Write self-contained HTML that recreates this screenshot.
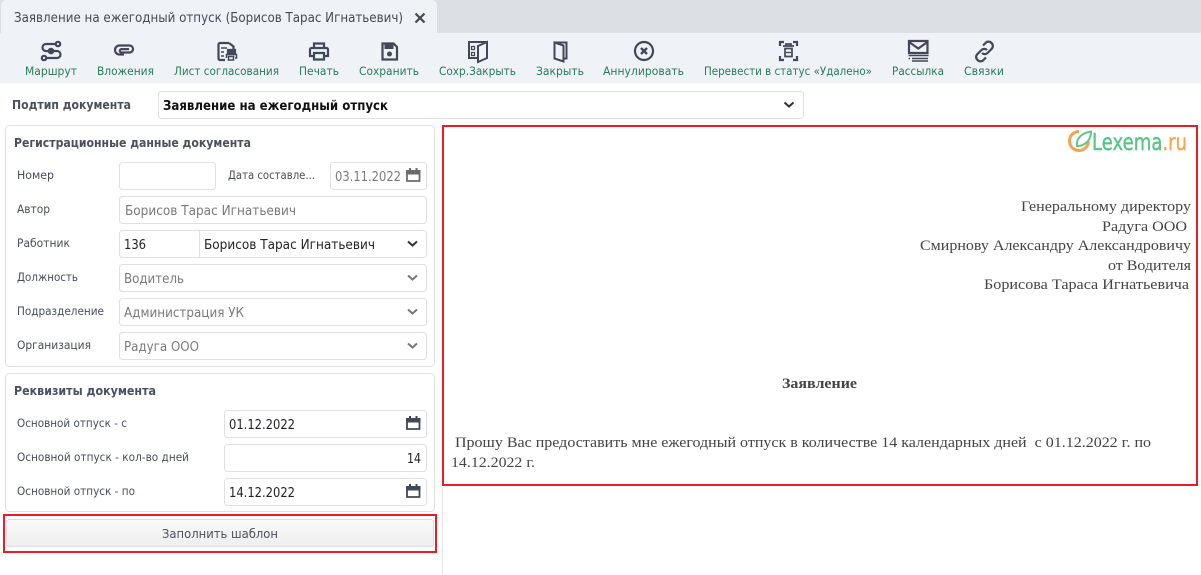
<!DOCTYPE html>
<html lang="ru"><head><meta charset="utf-8"><title>Заявление</title>
<style>
html,body{margin:0;padding:0;background:#fff;width:1201px;height:575px;overflow:hidden}
svg{display:block}
text{font-family:"DejaVu Sans","Liberation Sans",sans-serif;white-space:pre}
.tb{font-size:11.8px;fill:#2b7a58}
.lb{font-size:11.8px;fill:#484d5c}
.h{font-size:12px;font-weight:bold;fill:#4b505f}
.dis{font-size:13.2px;fill:#7a7a7a}
.en{font-size:13.2px;fill:#222327}
.d{font-family:"Liberation Serif",serif;font-size:15px;fill:#444}
.ic{fill:none;stroke:#42485a;stroke-width:2.200}
.f{fill:#fff;stroke:#dfdfe8;stroke-width:1}
</style></head><body>
<svg width="1201" height="575" viewBox="0 0 1201 575" xmlns="http://www.w3.org/2000/svg">
<defs><linearGradient id="g" x1="0" y1="0" x2="0" y2="1"><stop offset="0" stop-color="#fafafa"/><stop offset="1" stop-color="#eeeeee"/></linearGradient></defs>
<rect width="1201" height="575" fill="#fff"/>
<rect width="1201" height="33" fill="#dcdfe4"/>
<path d="M1 33V5a5 5 0 0 1 5-5H432a5 5 0 0 1 5 5V33Z" fill="#eff2f7"/>
<rect y="33" width="1201" height="50" fill="#eff2f7"/>
<text x="14" y="22" font-size="13.2" fill="#444a58" textLength="389" lengthAdjust="spacingAndGlyphs">Заявление на ежегодный отпуск (Борисов Тарас Игнатьевич)</text>
<path d="M415.500 13.500l9 9m0-9l-9 9" fill="none" stroke="#42485a" stroke-width="2.200"/>

<!-- toolbar icons -->
<g class="ic">
<path d="M56 44H46a3.500 3.500 0 0 0 0 7h11a3.500 3.500 0 0 1 0 7H47"/><circle cx="58" cy="44" r="2.200"/><circle cx="44" cy="58" r="2.200"/><circle cx="51" cy="51" r="2.200" fill="#42485a"/>
<path d="M124 54.500h-4.500a4.500 4.500 0 0 1 0-9h10a3.500 3.500 0 0 1 0 7h-8a1.700 1.700 0 0 1 0-3.400h7.500"/>
<path d="M229 43h-9a1.500 1.500 0 0 0-1.500 1.500v14a1.500 1.500 0 0 0 1.500 1.500h5M229 43l4.500 3.500V50"/><path d="M221 48h6M221 52h3M221 56h3" stroke-width="1.500"/>
<path d="M228 50h7v3h-7z" fill="#42485a"/><path d="M226.500 58v-3.500h10V58h-1.500M228.500 56.500h5v3.500h-5z" stroke-width="1.500"/>
<path d="M314 48v-4.500h10V48M314 56h-4v-6.500a1.500 1.500 0 0 1 1.500-1.500h15a1.500 1.500 0 0 1 1.500 1.500V56h-4M314 53h10v6.500h-10z"/>
<path d="M382.500 43.500h11l3.500 3.500v12.500h-14.500z"/><path d="M385 44v4.500h8V44" fill="#42485a" stroke-width="1"/><circle cx="389.500" cy="54" r="2.500" fill="#42485a" stroke="none"/>
<path d="M478 42h-9v16h9M487 42h-9M487 42v16l-9 4V46l9-4z" stroke-width="2"/><path d="M471.500 46.500h3v3h-3zM471.500 52.500h3v3h-3z" stroke-width="1.200"/>
<path d="M554.500 42.500h12V58.500h-3M554.500 42.500l9 3v16l-9-3z" stroke-width="2"/>
<circle cx="644" cy="51" r="9"/><path d="M641 48l6 6m0-6l-6 6" stroke-width="2.400"/>
<path d="M780 46v-4h4M793 42h4v4M797 56v4h-4M784 60h-4v-4"/><path d="M783 46h11M786 46v-2h5v2M785 48.500h7v8h-7z" stroke-width="1.700"/><path d="M786 52.500h5" stroke-width="1.300"/>
<path d="M909 41h18.500v12h-18.500zM909 42l9.300 6.500 9.200-6.500"/><path d="M908.500 55.500h20M912 58.500h16M908.500 58.500h1.500M912 61h16" stroke-width="1.500"/>
<path d="M983 45.500l2.500-2.500a4 4 0 0 1 6 0 4 4 0 0 1 0 6l-4 4a4 4 0 0 1-5.500 0M986 57.500l-2.500 2.500a4 4 0 0 1-6 0 4 4 0 0 1 0-6l4-4a4 4 0 0 1 5.500 0"/>
</g>
<!-- toolbar labels -->
<text class="tb" x="25" y="75" textLength="52" lengthAdjust="spacingAndGlyphs">Маршрут</text>
<text class="tb" x="97" y="75" textLength="57" lengthAdjust="spacingAndGlyphs">Вложения</text>
<text class="tb" x="174" y="75" textLength="105" lengthAdjust="spacingAndGlyphs">Лист согласования</text>
<text class="tb" x="299" y="75" textLength="40" lengthAdjust="spacingAndGlyphs">Печать</text>
<text class="tb" x="359" y="75" textLength="60" lengthAdjust="spacingAndGlyphs">Сохранить</text>
<text class="tb" x="439" y="75" textLength="77" lengthAdjust="spacingAndGlyphs">Сохр.Закрыть</text>
<text class="tb" x="536" y="75" textLength="48" lengthAdjust="spacingAndGlyphs">Закрыть</text>
<text class="tb" x="603" y="75" textLength="81" lengthAdjust="spacingAndGlyphs">Аннулировать</text>
<text class="tb" x="704" y="75" textLength="168" lengthAdjust="spacingAndGlyphs">Перевести в статус «Удалено»</text>
<text class="tb" x="892" y="75" textLength="52" lengthAdjust="spacingAndGlyphs">Рассылка</text>
<text class="tb" x="964" y="75" textLength="40" lengthAdjust="spacingAndGlyphs">Связки</text>

<!-- subtype -->
<text class="h" x="12" y="109" textLength="119" lengthAdjust="spacingAndGlyphs">Подтип документа</text>
<rect class="f" x="158.500" y="91.500" width="645" height="27" rx="3"/>
<text x="163" y="110" font-size="13.200" font-weight="bold" fill="#111" textLength="225" lengthAdjust="spacingAndGlyphs">Заявление на ежегодный отпуск</text>
<path d="M784.500 102.500l4.500 4 4.500-4" fill="none" stroke="#333" stroke-width="2"/>

<!-- panel 1 -->
<rect class="f" x="5.500" y="125.500" width="429" height="241" rx="4"/>
<text class="h" x="14" y="147" textLength="237" lengthAdjust="spacingAndGlyphs">Регистрационные данные документа</text>
<text class="lb" x="17" y="179" textLength="37" lengthAdjust="spacingAndGlyphs">Номер</text>
<rect class="f" x="119.500" y="162.500" width="96" height="27" rx="3"/>
<text class="lb" x="228" y="179" textLength="87" lengthAdjust="spacingAndGlyphs">Дата составле...</text>
<rect class="f" x="330.500" y="162.500" width="96" height="27" rx="3"/>
<text class="dis" x="335" y="181" textLength="66" lengthAdjust="spacingAndGlyphs">03.11.2022</text>
<path d="M407 171h12.500v10h-12.500z" fill="none" stroke="#6c6c6c" stroke-width="1.800"/><path d="M406 170h14.500v4.500h-14.500zM409 168h2v3h-2zM415.500 168h2v3h-2z" fill="#6c6c6c"/>

<text class="lb" x="17" y="213" textLength="33" lengthAdjust="spacingAndGlyphs">Автор</text>
<rect class="f" x="119.500" y="196.500" width="307" height="27" rx="3"/>
<text class="dis" x="125" y="215" textLength="171" lengthAdjust="spacingAndGlyphs">Борисов Тарас Игнатьевич</text>

<text class="lb" x="17" y="247" textLength="53" lengthAdjust="spacingAndGlyphs">Работник</text>
<rect class="f" x="119.500" y="230.500" width="307" height="27" rx="3"/>
<path d="M199.500 231v27" stroke="#dfdfe8"/>
<text class="en" x="124" y="249" textLength="22" lengthAdjust="spacingAndGlyphs">136</text>
<text class="en" x="204" y="249" textLength="171" lengthAdjust="spacingAndGlyphs">Борисов Тарас Игнатьевич</text>
<path d="M408 241.500l4.500 4 4.500-4" fill="none" stroke="#333" stroke-width="2"/>

<text class="lb" x="17" y="281" textLength="61" lengthAdjust="spacingAndGlyphs">Должность</text>
<rect class="f" x="119.500" y="264.500" width="307" height="27" rx="3"/>
<text class="dis" x="124" y="283" textLength="60" lengthAdjust="spacingAndGlyphs">Водитель</text>
<path d="M408 275.500l4.500 4 4.500-4" fill="none" stroke="#777" stroke-width="2"/>

<text class="lb" x="17" y="315" textLength="87" lengthAdjust="spacingAndGlyphs">Подразделение</text>
<rect class="f" x="119.500" y="298.500" width="307" height="27" rx="3"/>
<text class="dis" x="124" y="317" textLength="120" lengthAdjust="spacingAndGlyphs">Администрация УК</text>
<path d="M408 309.500l4.500 4 4.500-4" fill="none" stroke="#777" stroke-width="2"/>

<text class="lb" x="17" y="349" textLength="74" lengthAdjust="spacingAndGlyphs">Организация</text>
<rect class="f" x="119.500" y="332.500" width="307" height="27" rx="3"/>
<text class="dis" x="124" y="351" textLength="75" lengthAdjust="spacingAndGlyphs">Радуга ООО</text>
<path d="M408 343.500l4.500 4 4.500-4" fill="none" stroke="#777" stroke-width="2"/>

<!-- panel 2 -->
<rect class="f" x="5.500" y="373.500" width="429" height="138" rx="4"/>
<text class="h" x="14" y="395" textLength="142" lengthAdjust="spacingAndGlyphs">Реквизиты документа</text>
<text class="lb" x="17" y="427" textLength="110" lengthAdjust="spacingAndGlyphs">Основной отпуск - с</text>
<rect class="f" x="224.500" y="410.500" width="202" height="27" rx="3"/>
<text class="en" x="229" y="429" textLength="66" lengthAdjust="spacingAndGlyphs">01.12.2022</text>
<path d="M407 419h12.500v10h-12.500z" fill="none" stroke="#42485a" stroke-width="1.800"/><path d="M406 418h14.500v4.500h-14.500zM409 416h2v3h-2zM415.500 416h2v3h-2z" fill="#42485a"/>
<text class="lb" x="17" y="461" textLength="172" lengthAdjust="spacingAndGlyphs">Основной отпуск - кол-во дней</text>
<rect class="f" x="224.500" y="444.500" width="202" height="27" rx="3"/>
<text class="en" x="407" y="463" textLength="14" lengthAdjust="spacingAndGlyphs">14</text>
<text class="lb" x="17" y="495" textLength="118" lengthAdjust="spacingAndGlyphs">Основной отпуск - по</text>
<rect class="f" x="224.500" y="478.500" width="202" height="27" rx="3"/>
<text class="en" x="229" y="497" textLength="66" lengthAdjust="spacingAndGlyphs">14.12.2022</text>
<path d="M407 487h12.500v10h-12.500z" fill="none" stroke="#42485a" stroke-width="1.800"/><path d="M406 486h14.500v4.500h-14.500zM409 484h2v3h-2zM415.500 484h2v3h-2z" fill="#42485a"/>

<!-- button -->
<rect x="6.500" y="519.500" width="427" height="27" rx="3" fill="url(#g)" stroke="#dcdce4"/>
<text x="162" y="538" font-size="12.800" fill="#4b505f" textLength="116" lengthAdjust="spacingAndGlyphs">Заполнить шаблон</text>
<rect x="4" y="515" width="432" height="37" fill="none" stroke="#ed1c24" stroke-width="2"/>

<!-- document -->
<path d="M442.500 487V575" stroke="#e6e6e6"/>
<rect x="443" y="126" width="754" height="359" fill="#fff" stroke="#ed1c24" stroke-width="2"/>
<text class="d" x="1021" y="211" textLength="170" lengthAdjust="spacingAndGlyphs">Генеральному директору</text>
<text class="d" x="1102" y="231" textLength="85" lengthAdjust="spacingAndGlyphs">Радуга ООО</text>
<text class="d" x="920" y="250" textLength="271" lengthAdjust="spacingAndGlyphs">Смирнову Александру Александровичу</text>
<text class="d" x="1108" y="270" textLength="83" lengthAdjust="spacingAndGlyphs">от Водителя</text>
<text class="d" x="984" y="289" textLength="205" lengthAdjust="spacingAndGlyphs">Борисова Тараса Игнатьевича</text>
<text class="d" x="782" y="388" font-weight="bold" textLength="75" lengthAdjust="spacingAndGlyphs">Заявление</text>
<text class="d" x="455" y="447" textLength="696" lengthAdjust="spacingAndGlyphs">Прошу Вас предоставить мне ежегодный отпуск в количестве 14 календарных дней  с 01.12.2022 г. по</text>
<text class="d" x="451" y="467" textLength="84" lengthAdjust="spacingAndGlyphs">14.12.2022 г.</text>

<!-- logo -->
<path d="M1079 131.500a9.500 9.500 0 1 0 9.500 10" fill="none" stroke="#f6a350" stroke-width="3"/>
<path d="M1077 146c-1-8 5-13 14-14.500 0 8-5 14-13 14.500z" fill="#fff" stroke="#5cc98a" stroke-width="2"/>
<text x="1092" y="150" font-size="23" stroke="#56c587" stroke-width=".4" fill="#56c587" textLength="95" lengthAdjust="spacingAndGlyphs">Lexema<tspan fill="#f6a350" stroke="#f6a350">.ru</tspan></text>
</svg>
</body></html>
